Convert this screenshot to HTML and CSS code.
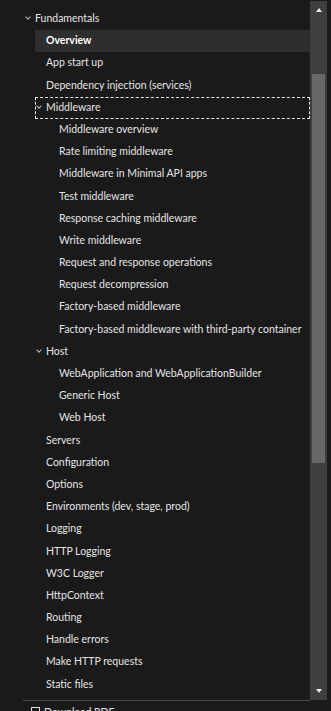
FILE: index.html
```html
<!DOCTYPE html>
<html lang="en">
<head>
    <meta charset="UTF-8">
    <meta name="viewport" content="width=device-width, initial-scale=1.0">
    <title>Table of contents</title>
    <link rel="stylesheet" href="styles.css">
</head>
<body>

    <div class="pane">
        <nav class="tree">
            <ul class="level-1">
                <li>
                    <div class="row parent"><span class="chevron"></span>Fundamentals</div>
                    <ul class="level-2">
                        <li><div class="row selected">Overview</div></li>
                        <li><div class="row">App start up</div></li>
                        <li><div class="row">Dependency injection (services)</div></li>
                        <li>
                            <div class="row parent focused"><span class="chevron"></span>Middleware</div>
                            <ul class="level-3">
                                <li><div class="row">Middleware overview</div></li>
                                <li><div class="row">Rate limiting middleware</div></li>
                                <li><div class="row">Middleware in Minimal API apps</div></li>
                                <li><div class="row">Test middleware</div></li>
                                <li><div class="row">Response caching middleware</div></li>
                                <li><div class="row">Write middleware</div></li>
                                <li><div class="row">Request and response operations</div></li>
                                <li><div class="row">Request decompression</div></li>
                                <li><div class="row">Factory-based middleware</div></li>
                                <li><div class="row">Factory-based middleware with third-party container</div></li>
                            </ul>
                        </li>
                        <li>
                            <div class="row parent"><span class="chevron"></span>Host</div>
                            <ul class="level-3">
                                <li><div class="row">WebApplication and WebApplicationBuilder</div></li>
                                <li><div class="row">Generic Host</div></li>
                                <li><div class="row">Web Host</div></li>
                            </ul>
                        </li>
                        <li><div class="row">Servers</div></li>
                        <li><div class="row">Configuration</div></li>
                        <li><div class="row">Options</div></li>
                        <li><div class="row">Environments (dev, stage, prod)</div></li>
                        <li><div class="row">Logging</div></li>
                        <li><div class="row">HTTP Logging</div></li>
                        <li><div class="row">W3C Logger</div></li>
                        <li><div class="row">HttpContext</div></li>
                        <li><div class="row">Routing</div></li>
                        <li><div class="row">Handle errors</div></li>
                        <li><div class="row">Make HTTP requests</div></li>
                        <li><div class="row">Static files</div></li>
                    </ul>
                </li>
            </ul>
        </nav>

        <div class="scrollbar">
            <span class="arrow up"></span>
            <div class="track">
                <div class="thumb"></div>
            </div>
            <span class="arrow down"></span>
        </div>
    </div>

    <div class="divider"></div>

    <div class="footer">
        <svg class="pdf-icon" width="10" height="10" viewBox="0 0 10 10">
            <rect x="0.5" y="0.5" width="8" height="9" fill="none" stroke="#dcdcdc" stroke-width="1"/>
        </svg>
        <span>Download PDF</span>
    </div>

</body>
</html>
```

FILE: styles.css
```css
/* General body styles */
body {
    margin: 0;
    background-color: #1a1a1a;
    font-family: 'Lato', 'Open Sans', sans-serif;
    font-size: 10.5px;
    color: #e4e4e4;
    overflow: hidden;
}

/* Tree + scrollbar */
.pane {
    display: flex;
    height: 700px;
    margin-right: 4px;
}

.tree {
    flex: 1;
    overflow: hidden;
    padding-top: 8px;
}

.tree ul {
    list-style: none;
    margin: 0;
    padding: 0;
}

.row {
    position: relative;
    height: 22.2px;
    line-height: 21px;
    white-space: nowrap;
    box-sizing: border-box;
}

.tree .level-1 > li > .row {
    padding-left: 35px;
}

.tree .level-2 {
    margin-left: 35px;
}

.tree .level-2 > li > .row {
    padding-left: 11px;
}

.tree .level-3 .row {
    padding-left: 24px;
}

.row.selected {
    background-color: #2e2e2e;
    font-weight: 700;
    color: #fff;
}

.row.focused {
    outline: 1px dashed #e8e8e8;
    outline-offset: -1px;
}

/* Expand chevron */
.chevron {
    position: absolute;
    top: 7px;
    width: 3px;
    height: 3px;
    border-right: 1px solid #bdbdbd;
    border-bottom: 1px solid #bdbdbd;
    transform: rotate(45deg);
}

.tree .level-1 > li > .row .chevron {
    left: 26px;
}

.tree .level-2 > li > .row .chevron {
    left: 2px;
}

/* Scrollbar */
.scrollbar {
    width: 17px;
    margin-top: 1px;
    background-color: #3e3e3e;
    display: flex;
    flex-direction: column;
    align-items: center;
}

.track {
    flex: 1;
    width: 100%;
    padding-top: 62px;
    box-sizing: border-box;
}

.thumb {
    width: 13px;
    height: 389px;
    margin: 0 auto;
    background-color: #686868;
}

.arrow {
    width: 0;
    height: 0;
    border-left: 3.5px solid transparent;
    border-right: 3.5px solid transparent;
}

.arrow.up {
    margin-top: 7px;
    border-bottom: 4px solid #eaeaea;
}

.arrow.down {
    margin-bottom: 7px;
    border-top: 4px solid #eaeaea;
}

.divider {
    height: 1px;
    margin: 0 21px 0 23px;
    background-color: #4a4a4a;
}

/* Footer */
.footer {
    display: flex;
    align-items: center;
    gap: 3px;
    padding: 5px 0 0 31px;
    font-size: 10.5px;
}
```
